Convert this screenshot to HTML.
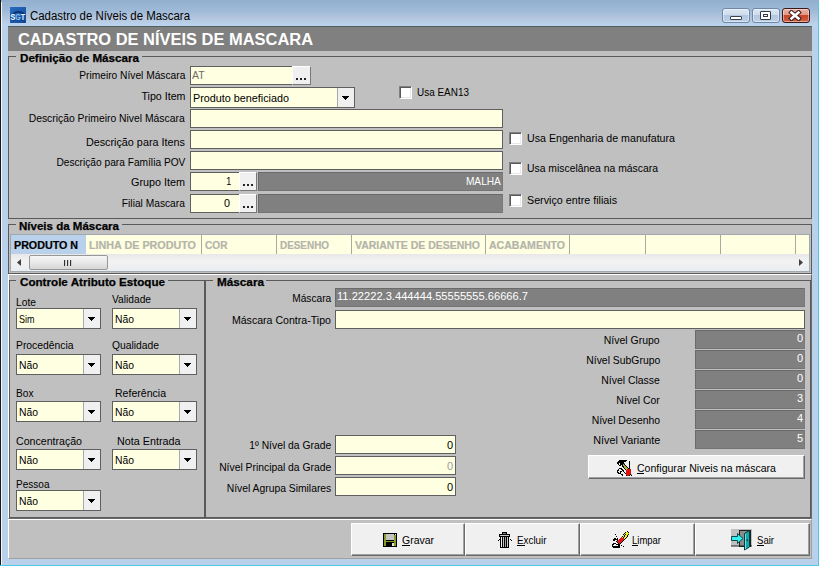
<!DOCTYPE html>
<html><head><meta charset="utf-8"><style>
html,body{margin:0;padding:0;width:819px;height:566px;overflow:hidden;background:#b9d1ea;}
body>div{position:absolute;box-sizing:border-box;}
.t{white-space:pre;}
</style></head><body>
<div style="left:0px;top:0px;width:819px;height:26px;background:linear-gradient(#92afcf 0px,#9fbad8 11px,#b4c6dd 18px,#bbd3ec 25px);"></div>
<div style="left:0px;top:0px;width:1px;height:566px;background:#1a1a1a;"></div>
<div style="left:1px;top:2px;width:1px;height:564px;background:#f4f8fc;"></div>
<div style="left:818px;top:2px;width:1px;height:564px;background:#50c8e8;"></div>
<div style="left:0px;top:565px;width:819px;height:1px;background:#50c8e8;"></div>
<svg style="position:absolute;left:10px;top:7px" width="16" height="16"><defs><linearGradient id="ig" x1="0" y1="0" x2="1" y2="1"><stop offset="0" stop-color="#2a6cc0"/><stop offset="1" stop-color="#114a98"/></linearGradient></defs><rect width="16" height="16" fill="url(#ig)"/><path d="M3 7Q8 2.5 14 7" stroke="#0a2f66" stroke-width="1.6" fill="none"/><path d="M2 14Q8 11 15 14" stroke="#0e3c7c" stroke-width="1.2" fill="none"/><text x="0.6" y="12.6" font-family="Liberation Sans" font-weight="bold" font-size="8.2" fill="#fff" textLength="14.6" lengthAdjust="spacingAndGlyphs">S<tspan fill="#8cc4f4">G</tspan><tspan fill="#e4f2ff">T</tspan></text></svg>
<div class="t" style="left:30px;top:9px;font:12px/14px 'Liberation Sans', sans-serif;color:#000;transform:scaleX(0.9519);transform-origin:left top;">Cadastro de Níveis de Mascara</div>
<div style="left:722px;top:8px;width:28px;height:15px;background:linear-gradient(#dbe6f3 0%,#cfdcec 45%,#b3c8e0 50%,#bccfe4 100%);border:1px solid #6f87a8;border-radius:3px;box-shadow:inset 0 0 0 1px rgba(255,255,255,0.45);"></div>
<div style="left:752px;top:8px;width:28px;height:15px;background:linear-gradient(#dbe6f3 0%,#cfdcec 45%,#b3c8e0 50%,#bccfe4 100%);border:1px solid #6f87a8;border-radius:3px;box-shadow:inset 0 0 0 1px rgba(255,255,255,0.45);"></div>
<div style="left:782px;top:8px;width:28px;height:15px;background:linear-gradient(#eab0a4 0%,#e29a8a 45%,#c6462c 50%,#d06040 100%);border:1px solid #3d1616;border-radius:3px;box-shadow:inset 0 0 0 1px rgba(255,255,255,0.45);"></div>
<div style="left:730px;top:16px;width:12px;height:4px;background:#fff;border:1px solid #3a4250;border-radius:1px;"></div>
<div style="left:760px;top:11px;width:11px;height:9px;background:#fff;border:1px solid #333a45;border-radius:1px;box-shadow:inset 0 0 0 2px #fff;"></div>
<div style="left:763px;top:14px;width:5px;height:3px;border:1px solid #333a45;"></div>
<svg style="position:absolute;left:788px;top:10px" width="14" height="11"><path d="M3.5 2.5L10.5 8.5M10.5 2.5L3.5 8.5" stroke="#3d1a1a" stroke-width="4.6" stroke-linecap="square"/><path d="M3.5 2.5L10.5 8.5M10.5 2.5L3.5 8.5" stroke="#fff" stroke-width="2.6" stroke-linecap="square"/></svg>
<div style="left:8px;top:26px;width:804px;height:532px;background:#c0c0c0;"></div>
<div style="left:8px;top:26px;width:804px;height:25px;background:#808080;border-top:1px solid #535e60;"></div>
<div class="t" style="left:18px;top:30px;font:bold 16px/20px 'Liberation Sans', sans-serif;color:#fff;transform:scaleX(1.0274);transform-origin:left top;">CADASTRO DE NÍVEIS DE MASCARA</div>
<div style="left:8px;top:56px;width:804px;height:163px;border:1px solid #5a5a5a;"></div>
<div style="left:16px;top:56px;width:126px;height:1px;background:#c0c0c0;"></div>
<div class="t" style="left:20px;top:52px;font:bold 11px/13px 'Liberation Sans', sans-serif;color:#000;transform:scaleX(1.0578);transform-origin:left top;-webkit-text-stroke:0.25px #000;">Definição de Máscara</div>
<div class="t" style="left:70.69px;top:69px;font:11px/13px 'Liberation Sans', sans-serif;color:#000;transform:scaleX(0.9273);transform-origin:right top;">Primeiro Nível Máscara</div>
<div style="left:190px;top:66px;width:103px;height:19px;background:#ffffe1;border:1px solid #5f5f5f;"></div>
<div style="left:292px;top:66px;width:19px;height:19px;background:#f0f0f0;border-top:1px solid #fff;border-left:1px solid #fff;border-right:1px solid #777;border-bottom:1px solid #777;"></div>
<div style="left:296px;top:78px;width:2px;height:2px;background:#222;"></div>
<div style="left:300px;top:78px;width:2px;height:2px;background:#222;"></div>
<div style="left:304px;top:78px;width:2px;height:2px;background:#222;"></div>
<div class="t" style="left:192px;top:69px;font:11px/13px 'Liberation Sans', sans-serif;color:#6d6d6d;transform:scaleX(0.9500);transform-origin:left top;">AT</div>
<div class="t" style="left:139.55px;top:90px;font:11px/13px 'Liberation Sans', sans-serif;color:#000;transform:scaleX(0.9680);transform-origin:right top;">Tipo Item</div>
<div style="left:190px;top:87px;width:165px;height:21px;background:#ffffe1;border:1px solid #5f5f5f;"></div>
<div style="left:337px;top:88px;width:17px;height:19px;background:#f0f0f0;border-left:1px solid #a8a8a8;"></div>
<svg style="position:absolute;left:342px;top:96px" width="7" height="4"><path d="M0 0H7L3.5 4Z" fill="#000" shape-rendering="crispEdges"/></svg>
<div class="t" style="left:193px;top:92px;font:11px/13px 'Liberation Sans', sans-serif;color:#000;transform:scaleX(0.9810);transform-origin:left top;">Produto beneficiado</div>
<div style="left:399px;top:86px;width:13px;height:13px;background:#fff;border-top:1px solid #808080;border-left:1px solid #808080;border-right:1px solid #fff;border-bottom:1px solid #fff;box-shadow:inset 1px 1px 0 #5a5a5a, inset -1px -1px 0 #e8e8e8;"></div>
<div class="t" style="left:417px;top:86px;font:11px/13px 'Liberation Sans', sans-serif;color:#000;transform:scaleX(0.9046);transform-origin:left top;">Usa EAN13</div>
<div class="t" style="left:19.34px;top:112px;font:11px/13px 'Liberation Sans', sans-serif;color:#000;transform:scaleX(0.9417);transform-origin:right top;">Descrição Primeiro Nivel Máscara</div>
<div style="left:190px;top:109px;width:313px;height:19px;background:#ffffe1;border:1px solid #5f5f5f;"></div>
<div class="t" style="left:84.11px;top:136px;font:11px/13px 'Liberation Sans', sans-serif;color:#000;transform:scaleX(0.9813);transform-origin:right top;">Descrição para Itens</div>
<div style="left:190px;top:130px;width:313px;height:19px;background:#ffffe1;border:1px solid #5f5f5f;"></div>
<div class="t" style="left:45.61px;top:156px;font:11px/13px 'Liberation Sans', sans-serif;color:#000;transform:scaleX(0.9255);transform-origin:right top;">Descrição para Família POV</div>
<div style="left:190px;top:151px;width:313px;height:19px;background:#ffffe1;border:1px solid #5f5f5f;"></div>
<div class="t" style="left:129.97px;top:176px;font:11px/13px 'Liberation Sans', sans-serif;color:#000;transform:scaleX(0.9813);transform-origin:right top;">Grupo Item</div>
<div style="left:190px;top:172px;width:50px;height:19px;background:#ffffe1;border:1px solid #5f5f5f;"></div>
<div style="left:239px;top:172px;width:18px;height:19px;background:#f0f0f0;border-top:1px solid #fff;border-left:1px solid #fff;border-right:1px solid #777;border-bottom:1px solid #777;"></div>
<div style="left:243px;top:184px;width:2px;height:2px;background:#222;"></div>
<div style="left:247px;top:184px;width:2px;height:2px;background:#222;"></div>
<div style="left:251px;top:184px;width:2px;height:2px;background:#222;"></div>
<div class="t" style="left:224.88px;top:175px;font:11px/13px 'Liberation Sans', sans-serif;color:#000;transform:scaleX(0.8163);transform-origin:right top;">1</div>
<div style="left:258px;top:172px;width:245px;height:19px;background:#808080;border:1px solid #6a6a6a;border-right-color:#7a7a7a;border-bottom-color:#747474;"></div>
<div class="t" style="left:463.09px;top:175px;font:11px/13px 'Liberation Sans', sans-serif;color:#fff;transform:scaleX(0.9233);transform-origin:right top;">MALHA</div>
<div class="t" style="left:117.14px;top:197px;font:11px/13px 'Liberation Sans', sans-serif;color:#000;transform:scaleX(0.9284);transform-origin:right top;">Filial Mascara</div>
<div style="left:190px;top:194px;width:50px;height:19px;background:#ffffe1;border:1px solid #5f5f5f;"></div>
<div style="left:239px;top:194px;width:18px;height:19px;background:#f0f0f0;border-top:1px solid #fff;border-left:1px solid #fff;border-right:1px solid #777;border-bottom:1px solid #777;"></div>
<div style="left:243px;top:206px;width:2px;height:2px;background:#222;"></div>
<div style="left:247px;top:206px;width:2px;height:2px;background:#222;"></div>
<div style="left:251px;top:206px;width:2px;height:2px;background:#222;"></div>
<div class="t" style="left:223.88px;top:197px;font:11px/13px 'Liberation Sans', sans-serif;color:#000;transform:scaleX(0.9796);transform-origin:right top;">0</div>
<div style="left:258px;top:194px;width:245px;height:19px;background:#808080;border:1px solid #6a6a6a;border-right-color:#7a7a7a;border-bottom-color:#747474;"></div>
<div style="left:509px;top:132px;width:13px;height:13px;background:#fff;border-top:1px solid #808080;border-left:1px solid #808080;border-right:1px solid #fff;border-bottom:1px solid #fff;box-shadow:inset 1px 1px 0 #5a5a5a, inset -1px -1px 0 #e8e8e8;"></div>
<div class="t" style="left:527px;top:132px;font:11px/13px 'Liberation Sans', sans-serif;color:#000;transform:scaleX(0.9680);transform-origin:left top;">Usa Engenharia de manufatura</div>
<div style="left:509px;top:162px;width:13px;height:13px;background:#fff;border-top:1px solid #808080;border-left:1px solid #808080;border-right:1px solid #fff;border-bottom:1px solid #fff;box-shadow:inset 1px 1px 0 #5a5a5a, inset -1px -1px 0 #e8e8e8;"></div>
<div class="t" style="left:527px;top:162px;font:11px/13px 'Liberation Sans', sans-serif;color:#000;transform:scaleX(0.9438);transform-origin:left top;">Usa miscelânea na máscara</div>
<div style="left:509px;top:194px;width:13px;height:13px;background:#fff;border-top:1px solid #808080;border-left:1px solid #808080;border-right:1px solid #fff;border-bottom:1px solid #fff;box-shadow:inset 1px 1px 0 #5a5a5a, inset -1px -1px 0 #e8e8e8;"></div>
<div class="t" style="left:527px;top:194px;font:11px/13px 'Liberation Sans', sans-serif;color:#000;transform:scaleX(0.9748);transform-origin:left top;">Serviço entre filiais</div>
<div style="left:8px;top:224px;width:804px;height:50px;border:1px solid #5a5a5a;"></div>
<div style="left:16px;top:224px;width:106px;height:1px;background:#c0c0c0;"></div>
<div class="t" style="left:19px;top:220px;font:bold 11px/13px 'Liberation Sans', sans-serif;color:#000;transform:scaleX(1.0483);transform-origin:left top;-webkit-text-stroke:0.25px #000;">Níveis da Máscara</div>
<div style="left:10px;top:234px;width:800px;height:38px;background:#f0f0f0;border:1px solid #a0a8b0;"></div>
<div style="left:11px;top:235px;width:798px;height:19px;background:#ffffe1;"></div>
<div style="left:11px;top:235px;width:75px;height:19px;background:#b9d1ea;"></div>
<div style="left:201px;top:235px;width:1px;height:19px;background:#a9a9a0;"></div>
<div style="left:276px;top:235px;width:1px;height:19px;background:#a9a9a0;"></div>
<div style="left:351px;top:235px;width:1px;height:19px;background:#a9a9a0;"></div>
<div style="left:485px;top:235px;width:1px;height:19px;background:#a9a9a0;"></div>
<div style="left:569px;top:235px;width:1px;height:19px;background:#a9a9a0;"></div>
<div style="left:645px;top:235px;width:1px;height:19px;background:#a9a9a0;"></div>
<div style="left:720px;top:235px;width:1px;height:19px;background:#a9a9a0;"></div>
<div style="left:795px;top:235px;width:1px;height:19px;background:#a9a9a0;"></div>
<div class="t" style="left:14px;top:239px;font:bold 11px/13px 'Liberation Sans', sans-serif;color:#000;transform:scaleX(0.9725);transform-origin:left top;-webkit-text-stroke:0.2px #000;">PRODUTO N</div>
<div class="t" style="left:89px;top:239px;font:bold 11px/13px 'Liberation Sans', sans-serif;color:#b4b4aa;transform:scaleX(0.9780);transform-origin:left top;-webkit-text-stroke:0.2px #b4b4aa;">LINHA DE PRODUTO</div>
<div class="t" style="left:205px;top:239px;font:bold 11px/13px 'Liberation Sans', sans-serif;color:#b4b4aa;transform:scaleX(0.9201);transform-origin:left top;-webkit-text-stroke:0.2px #b4b4aa;">COR</div>
<div class="t" style="left:280px;top:239px;font:bold 11px/13px 'Liberation Sans', sans-serif;color:#b4b4aa;transform:scaleX(0.9006);transform-origin:left top;-webkit-text-stroke:0.2px #b4b4aa;">DESENHO</div>
<div class="t" style="left:355px;top:239px;font:bold 11px/13px 'Liberation Sans', sans-serif;color:#b4b4aa;transform:scaleX(0.9527);transform-origin:left top;-webkit-text-stroke:0.2px #b4b4aa;">VARIANTE DE DESENHO</div>
<div class="t" style="left:489px;top:239px;font:bold 11px/13px 'Liberation Sans', sans-serif;color:#b4b4aa;transform:scaleX(0.9590);transform-origin:left top;-webkit-text-stroke:0.2px #b4b4aa;">ACABAMENTO</div>
<div style="left:11px;top:254px;width:798px;height:17px;background:linear-gradient(#e8e8e8,#f2f2f2 40%,#eaeef2);"></div>
<svg style="position:absolute;left:17px;top:259px" width="5" height="8"><path d="M4 0V7L0 3.5Z" fill="#404040"/></svg>
<svg style="position:absolute;left:799px;top:259px" width="5" height="8"><path d="M0 0V7L4 3.5Z" fill="#404040"/></svg>
<div style="left:29px;top:255px;width:79px;height:15px;background:linear-gradient(#f6f6f6,#e8e8e8 50%,#d6d6d6);border:1px solid #979797;border-radius:2px;"></div>
<div style="left:64px;top:260px;width:2px;height:6px;background:linear-gradient(90deg,#333 50%,#ccc 50%);"></div>
<div style="left:67px;top:260px;width:2px;height:6px;background:linear-gradient(90deg,#333 50%,#ccc 50%);"></div>
<div style="left:70px;top:260px;width:2px;height:6px;background:linear-gradient(90deg,#333 50%,#ccc 50%);"></div>
<div style="left:8px;top:274px;width:804px;height:245px;border-top:1px solid #fff;border-left:1px solid #fff;border-right:1px solid #6a6a6a;border-bottom:1px solid #6a6a6a;"></div>
<div style="left:9px;top:280px;width:196px;height:238px;border:1px solid #5a5a5a;"></div>
<div style="left:16px;top:280px;width:152px;height:1px;background:#c0c0c0;"></div>
<div class="t" style="left:20px;top:276px;font:bold 11px/13px 'Liberation Sans', sans-serif;color:#000;transform:scaleX(1.0577);transform-origin:left top;-webkit-text-stroke:0.25px #000;">Controle Atributo Estoque</div>
<div class="t" style="left:16px;top:296px;font:11px/13px 'Liberation Sans', sans-serif;color:#000;transform:scaleX(0.9336);transform-origin:left top;">Lote</div>
<div style="left:16px;top:308px;width:85px;height:21px;background:#ffffe1;border:1px solid #5f5f5f;"></div>
<div style="left:83px;top:309px;width:17px;height:19px;background:#f0f0f0;border-left:1px solid #a8a8a8;"></div>
<svg style="position:absolute;left:88px;top:317px" width="7" height="4"><path d="M0 0H7L3.5 4Z" fill="#000" shape-rendering="crispEdges"/></svg>
<div class="t" style="left:19px;top:313px;font:11px/13px 'Liberation Sans', sans-serif;color:#000;transform:scaleX(0.8178);transform-origin:left top;">Sim</div>
<div class="t" style="left:112px;top:293px;font:11px/13px 'Liberation Sans', sans-serif;color:#000;transform:scaleX(0.9286);transform-origin:left top;">Validade</div>
<div style="left:112px;top:308px;width:85px;height:21px;background:#ffffe1;border:1px solid #5f5f5f;"></div>
<div style="left:179px;top:309px;width:17px;height:19px;background:#f0f0f0;border-left:1px solid #a8a8a8;"></div>
<svg style="position:absolute;left:184px;top:317px" width="7" height="4"><path d="M0 0H7L3.5 4Z" fill="#000" shape-rendering="crispEdges"/></svg>
<div class="t" style="left:115px;top:313px;font:11px/13px 'Liberation Sans', sans-serif;color:#000;transform:scaleX(0.9412);transform-origin:left top;">Não</div>
<div class="t" style="left:16px;top:339px;font:11px/13px 'Liberation Sans', sans-serif;color:#000;transform:scaleX(0.9402);transform-origin:left top;">Procedência</div>
<div style="left:16px;top:354px;width:85px;height:21px;background:#ffffe1;border:1px solid #5f5f5f;"></div>
<div style="left:83px;top:355px;width:17px;height:19px;background:#f0f0f0;border-left:1px solid #a8a8a8;"></div>
<svg style="position:absolute;left:88px;top:363px" width="7" height="4"><path d="M0 0H7L3.5 4Z" fill="#000" shape-rendering="crispEdges"/></svg>
<div class="t" style="left:19px;top:359px;font:11px/13px 'Liberation Sans', sans-serif;color:#000;transform:scaleX(0.9412);transform-origin:left top;">Não</div>
<div class="t" style="left:112px;top:339px;font:11px/13px 'Liberation Sans', sans-serif;color:#000;transform:scaleX(0.9371);transform-origin:left top;">Qualidade</div>
<div style="left:112px;top:354px;width:85px;height:21px;background:#ffffe1;border:1px solid #5f5f5f;"></div>
<div style="left:179px;top:355px;width:17px;height:19px;background:#f0f0f0;border-left:1px solid #a8a8a8;"></div>
<svg style="position:absolute;left:184px;top:363px" width="7" height="4"><path d="M0 0H7L3.5 4Z" fill="#000" shape-rendering="crispEdges"/></svg>
<div class="t" style="left:115px;top:359px;font:11px/13px 'Liberation Sans', sans-serif;color:#000;transform:scaleX(0.9412);transform-origin:left top;">Não</div>
<div class="t" style="left:16px;top:387px;font:11px/13px 'Liberation Sans', sans-serif;color:#000;transform:scaleX(0.9226);transform-origin:left top;">Box</div>
<div style="left:16px;top:401px;width:85px;height:21px;background:#ffffe1;border:1px solid #5f5f5f;"></div>
<div style="left:83px;top:402px;width:17px;height:19px;background:#f0f0f0;border-left:1px solid #a8a8a8;"></div>
<svg style="position:absolute;left:88px;top:410px" width="7" height="4"><path d="M0 0H7L3.5 4Z" fill="#000" shape-rendering="crispEdges"/></svg>
<div class="t" style="left:19px;top:406px;font:11px/13px 'Liberation Sans', sans-serif;color:#000;transform:scaleX(0.9412);transform-origin:left top;">Não</div>
<div class="t" style="left:115px;top:387px;font:11px/13px 'Liberation Sans', sans-serif;color:#000;transform:scaleX(0.9586);transform-origin:left top;">Referência</div>
<div style="left:112px;top:401px;width:85px;height:21px;background:#ffffe1;border:1px solid #5f5f5f;"></div>
<div style="left:179px;top:402px;width:17px;height:19px;background:#f0f0f0;border-left:1px solid #a8a8a8;"></div>
<svg style="position:absolute;left:184px;top:410px" width="7" height="4"><path d="M0 0H7L3.5 4Z" fill="#000" shape-rendering="crispEdges"/></svg>
<div class="t" style="left:115px;top:406px;font:11px/13px 'Liberation Sans', sans-serif;color:#000;transform:scaleX(0.9412);transform-origin:left top;">Não</div>
<div class="t" style="left:16px;top:435px;font:11px/13px 'Liberation Sans', sans-serif;color:#000;transform:scaleX(0.9635);transform-origin:left top;">Concentração</div>
<div style="left:16px;top:449px;width:85px;height:21px;background:#ffffe1;border:1px solid #5f5f5f;"></div>
<div style="left:83px;top:450px;width:17px;height:19px;background:#f0f0f0;border-left:1px solid #a8a8a8;"></div>
<svg style="position:absolute;left:88px;top:458px" width="7" height="4"><path d="M0 0H7L3.5 4Z" fill="#000" shape-rendering="crispEdges"/></svg>
<div class="t" style="left:19px;top:454px;font:11px/13px 'Liberation Sans', sans-serif;color:#000;transform:scaleX(0.9412);transform-origin:left top;">Não</div>
<div class="t" style="left:117px;top:435px;font:11px/13px 'Liberation Sans', sans-serif;color:#000;transform:scaleX(0.9795);transform-origin:left top;">Nota Entrada</div>
<div style="left:112px;top:449px;width:85px;height:21px;background:#ffffe1;border:1px solid #5f5f5f;"></div>
<div style="left:179px;top:450px;width:17px;height:19px;background:#f0f0f0;border-left:1px solid #a8a8a8;"></div>
<svg style="position:absolute;left:184px;top:458px" width="7" height="4"><path d="M0 0H7L3.5 4Z" fill="#000" shape-rendering="crispEdges"/></svg>
<div class="t" style="left:115px;top:454px;font:11px/13px 'Liberation Sans', sans-serif;color:#000;transform:scaleX(0.9412);transform-origin:left top;">Não</div>
<div class="t" style="left:16px;top:478px;font:11px/13px 'Liberation Sans', sans-serif;color:#000;transform:scaleX(0.9127);transform-origin:left top;">Pessoa</div>
<div style="left:16px;top:490px;width:85px;height:21px;background:#ffffe1;border:1px solid #5f5f5f;"></div>
<div style="left:83px;top:491px;width:17px;height:19px;background:#f0f0f0;border-left:1px solid #a8a8a8;"></div>
<svg style="position:absolute;left:88px;top:499px" width="7" height="4"><path d="M0 0H7L3.5 4Z" fill="#000" shape-rendering="crispEdges"/></svg>
<div class="t" style="left:19px;top:495px;font:11px/13px 'Liberation Sans', sans-serif;color:#000;transform:scaleX(0.9412);transform-origin:left top;">Não</div>
<div style="left:205px;top:280px;width:606px;height:238px;border:1px solid #5a5a5a;"></div>
<div style="left:213px;top:280px;width:53px;height:1px;background:#c0c0c0;"></div>
<div class="t" style="left:217px;top:276px;font:bold 11px/13px 'Liberation Sans', sans-serif;color:#000;transform:scaleX(1.0670);transform-origin:left top;-webkit-text-stroke:0.25px #000;">Máscara</div>
<div class="t" style="left:288.81px;top:292px;font:11px/13px 'Liberation Sans', sans-serif;color:#000;transform:scaleX(0.9244);transform-origin:right top;">Máscara</div>
<div style="left:335px;top:288px;width:470px;height:19px;background:#808080;border:1px solid #6a6a6a;border-right-color:#7a7a7a;border-bottom-color:#747474;"></div>
<div class="t" style="left:337px;top:290px;font:11px/13px 'Liberation Sans', sans-serif;color:#fff;transform:scaleX(1.0115);transform-origin:left top;">11.22222.3.444444.55555555.66666.7</div>
<div class="t" style="left:228.09px;top:314px;font:11px/13px 'Liberation Sans', sans-serif;color:#000;transform:scaleX(0.9620);transform-origin:right top;">Máscara Contra-Tipo</div>
<div style="left:335px;top:310px;width:470px;height:19px;background:#ffffe1;border:1px solid #5f5f5f;"></div>
<div class="t" style="left:601.30px;top:334px;font:11px/13px 'Liberation Sans', sans-serif;color:#000;transform:scaleX(0.9540);transform-origin:right top;">Nível Grupo</div>
<div style="left:695px;top:330px;width:110px;height:19px;background:#808080;border:1px solid #6a6a6a;border-right-color:#7a7a7a;border-bottom-color:#747474;"></div>
<div class="t" style="left:796.88px;top:332px;font:11px/13px 'Liberation Sans', sans-serif;color:#fff;">0</div>
<div class="t" style="left:581.73px;top:354px;font:11px/13px 'Liberation Sans', sans-serif;color:#000;transform:scaleX(0.9455);transform-origin:right top;">Nível SubGrupo</div>
<div style="left:695px;top:350px;width:110px;height:19px;background:#808080;border:1px solid #6a6a6a;border-right-color:#7a7a7a;border-bottom-color:#747474;"></div>
<div class="t" style="left:796.88px;top:352px;font:11px/13px 'Liberation Sans', sans-serif;color:#fff;">0</div>
<div class="t" style="left:598.25px;top:374px;font:11px/13px 'Liberation Sans', sans-serif;color:#000;transform:scaleX(0.9474);transform-origin:right top;">Nível Classe</div>
<div style="left:695px;top:370px;width:110px;height:19px;background:#808080;border:1px solid #6a6a6a;border-right-color:#7a7a7a;border-bottom-color:#747474;"></div>
<div class="t" style="left:796.88px;top:372px;font:11px/13px 'Liberation Sans', sans-serif;color:#fff;">0</div>
<div class="t" style="left:614.16px;top:394px;font:11px/13px 'Liberation Sans', sans-serif;color:#000;transform:scaleX(0.9489);transform-origin:right top;">Nível Cor</div>
<div style="left:695px;top:390px;width:110px;height:19px;background:#808080;border:1px solid #6a6a6a;border-right-color:#7a7a7a;border-bottom-color:#747474;"></div>
<div class="t" style="left:796.88px;top:392px;font:11px/13px 'Liberation Sans', sans-serif;color:#fff;">3</div>
<div class="t" style="left:587.84px;top:414px;font:11px/13px 'Liberation Sans', sans-serif;color:#000;transform:scaleX(0.9493);transform-origin:right top;">Nível Desenho</div>
<div style="left:695px;top:410px;width:110px;height:19px;background:#808080;border:1px solid #6a6a6a;border-right-color:#7a7a7a;border-bottom-color:#747474;"></div>
<div class="t" style="left:796.88px;top:412px;font:11px/13px 'Liberation Sans', sans-serif;color:#fff;">4</div>
<div class="t" style="left:591.72px;top:434px;font:11px/13px 'Liberation Sans', sans-serif;color:#000;transform:scaleX(0.9812);transform-origin:right top;">Nível Variante</div>
<div style="left:695px;top:430px;width:110px;height:19px;background:#808080;border:1px solid #6a6a6a;border-right-color:#7a7a7a;border-bottom-color:#747474;"></div>
<div class="t" style="left:796.88px;top:432px;font:11px/13px 'Liberation Sans', sans-serif;color:#fff;">5</div>
<div class="t" style="left:243.81px;top:439px;font:11px/13px 'Liberation Sans', sans-serif;color:#000;transform:scaleX(0.9400);transform-origin:right top;">1º Nível da Grade</div>
<div style="left:335px;top:435px;width:121px;height:19px;background:#ffffe1;border:1px solid #5f5f5f;"></div>
<div class="t" style="left:446.88px;top:439px;font:11px/13px 'Liberation Sans', sans-serif;color:#000;">0</div>
<div class="t" style="left:211.77px;top:461px;font:11px/13px 'Liberation Sans', sans-serif;color:#000;transform:scaleX(0.9400);transform-origin:right top;">Nível Principal da Grade</div>
<div style="left:335px;top:456px;width:121px;height:19px;background:#ffffe1;border:1px solid #5f5f5f;"></div>
<div class="t" style="left:446.88px;top:460px;font:11px/13px 'Liberation Sans', sans-serif;color:#9a9a9a;">0</div>
<div class="t" style="left:219.72px;top:482px;font:11px/13px 'Liberation Sans', sans-serif;color:#000;transform:scaleX(0.9400);transform-origin:right top;">Nível Agrupa Similares</div>
<div style="left:335px;top:477px;width:121px;height:19px;background:#ffffe1;border:1px solid #5f5f5f;"></div>
<div class="t" style="left:446.88px;top:481px;font:11px/13px 'Liberation Sans', sans-serif;color:#000;">0</div>
<div style="left:588px;top:455px;width:217px;height:24px;background:#f0f0f0;border-top:1px solid #fff;border-left:1px solid #fff;border-right:1px solid #696969;border-bottom:1px solid #696969;box-shadow:inset -1px -1px 0 #a0a0a0;"></div>
<div class="t" style="left:637px;top:462px;font:11px/13px 'Liberation Sans', sans-serif;color:#000;transform:scaleX(0.9593);transform-origin:left top;">Configurar Niveis na máscara</div>
<div style="left:637px;top:473px;width:7px;height:1px;background:#000;"></div>
<div style="left:8px;top:519px;width:804px;height:40px;border-top:1px solid #fff;border-left:1px solid #fff;border-right:1px solid #a0a0a0;border-bottom:1px solid #a0a0a0;"></div>
<div style="left:351px;top:523px;width:114px;height:33px;background:#f0f0f0;border-top:1px solid #fff;border-left:1px solid #fff;border-right:1px solid #696969;border-bottom:1px solid #696969;box-shadow:inset -1px -1px 0 #a0a0a0;"></div>
<div class="t" style="left:402px;top:534px;font:11px/13px 'Liberation Sans', sans-serif;color:#000;transform:scaleX(0.9517);transform-origin:left top;">Gravar</div>
<div style="left:402px;top:545px;width:8px;height:1px;background:#000;"></div>
<div style="left:465px;top:523px;width:115px;height:33px;background:#f0f0f0;border-top:1px solid #fff;border-left:1px solid #fff;border-right:1px solid #696969;border-bottom:1px solid #696969;box-shadow:inset -1px -1px 0 #a0a0a0;"></div>
<div class="t" style="left:517px;top:534px;font:11px/13px 'Liberation Sans', sans-serif;color:#000;transform:scaleX(0.8935);transform-origin:left top;">Excluir</div>
<div style="left:517px;top:545px;width:8px;height:1px;background:#000;"></div>
<div style="left:580px;top:523px;width:115px;height:33px;background:#f0f0f0;border-top:1px solid #fff;border-left:1px solid #fff;border-right:1px solid #696969;border-bottom:1px solid #696969;box-shadow:inset -1px -1px 0 #a0a0a0;"></div>
<div class="t" style="left:632px;top:534px;font:11px/13px 'Liberation Sans', sans-serif;color:#000;transform:scaleX(0.8625);transform-origin:left top;">Limpar</div>
<div style="left:632px;top:545px;width:6px;height:1px;background:#000;"></div>
<div style="left:695px;top:523px;width:115px;height:33px;background:#f0f0f0;border-top:1px solid #fff;border-left:1px solid #fff;border-right:1px solid #696969;border-bottom:1px solid #696969;box-shadow:inset -1px -1px 0 #a0a0a0;"></div>
<div class="t" style="left:757px;top:534px;font:11px/13px 'Liberation Sans', sans-serif;color:#000;transform:scaleX(0.8690);transform-origin:left top;">Sair</div>
<div style="left:757px;top:545px;width:7px;height:1px;background:#000;"></div>
<svg style="position:absolute;left:383px;top:533px" width="14" height="14" shape-rendering="crispEdges"><rect width="14" height="14" fill="#000"/><rect x="1" y="1" width="2" height="12" fill="#8a9a28"/><rect x="11" y="2" width="2" height="11" fill="#8a9a28"/><rect x="12" y="1" width="1" height="1" fill="#e8e8e8"/><rect x="3" y="1" width="8" height="6" fill="#c4c4c4"/><rect x="1" y="8" width="12" height="1" fill="#8a9a28"/><rect x="9" y="10" width="2" height="3" fill="#e4e4d0"/></svg>
<svg style="position:absolute;left:497px;top:531px" width="16" height="18" shape-rendering="crispEdges"><rect x="5" y="1" width="5" height="2" fill="#000"/><rect x="6" y="2" width="3" height="1" fill="#808080"/><rect x="2" y="3" width="11" height="3" fill="#000"/><rect x="3" y="4" width="9" height="1" fill="#c8c8c8"/><rect x="3" y="6" width="9" height="11" fill="#000"/><rect x="4" y="6" width="1" height="10" fill="#f0f0f0"/><rect x="6" y="6" width="1" height="10" fill="#c8c8c8"/><rect x="8" y="6" width="1" height="10" fill="#a0a0a0"/><rect x="10" y="6" width="1" height="10" fill="#c8c8c8"/><rect x="1" y="9" width="1" height="1" fill="#000"/><rect x="2" y="8" width="1" height="1" fill="#000"/><rect x="13" y="8" width="1" height="1" fill="#000"/><rect x="14" y="9" width="1" height="1" fill="#000"/></svg>
<svg style="position:absolute;left:731px;top:529px" width="22" height="22"><rect x="0" y="0" width="21" height="17" fill="#c0c0c0"/><rect x="8.5" y="1.5" width="11" height="16" fill="#8c8c8c" stroke="#202020" stroke-width="1"/><rect x="0" y="16.5" width="21" height="1" fill="#202020"/><path d="M13.5 4.5L18.5 1.5V18L13.5 21Z" fill="#10a8a8" stroke="#0a3a3a" stroke-width="1"/><path d="M14 5L15 4.5V20L14 20.5Z" fill="#60e8e8"/><rect x="15.6" y="10.5" width="1.2" height="1.5" fill="#0a2a2a"/><path d="M0.5 7.5H6.5V4.5L12 9.5L6.5 14.5V11.5H0.5Z" fill="#30f0f0" stroke="#0a4a4a" stroke-width="1"/></svg>
<svg style="position:absolute;left:614px;top:457px" width="22" height="19" shape-rendering="crispEdges"><rect x="5" y="3" width="8" height="1" fill="#000"/><rect x="4" y="4" width="8" height="1" fill="#000"/><rect x="15" y="4" width="1" height="1" fill="#000"/><rect x="3" y="5" width="7" height="1" fill="#000"/><rect x="15" y="5" width="1" height="1" fill="#000"/><rect x="3" y="6" width="2" height="1" fill="#000"/><rect x="6" y="6" width="4" height="1" fill="#000"/><rect x="10" y="6" width="1" height="1" fill="#808080"/><rect x="15" y="6" width="1" height="1" fill="#000"/><rect x="4" y="7" width="1" height="1" fill="#000"/><rect x="6" y="7" width="3" height="1" fill="#000"/><rect x="9" y="7" width="1" height="1" fill="#b0b040"/><rect x="10" y="7" width="1" height="1" fill="#000"/><rect x="15" y="7" width="1" height="1" fill="#000"/><rect x="5" y="8" width="2" height="1" fill="#000"/><rect x="8" y="8" width="1" height="1" fill="#000"/><rect x="9" y="8" width="2" height="1" fill="#b0b040"/><rect x="11" y="8" width="1" height="1" fill="#000"/><rect x="15" y="8" width="1" height="1" fill="#000"/><rect x="8" y="9" width="2" height="1" fill="#000"/><rect x="10" y="9" width="2" height="1" fill="#b0b040"/><rect x="12" y="9" width="1" height="1" fill="#000"/><rect x="15" y="9" width="1" height="1" fill="#000"/><rect x="9" y="10" width="1" height="1" fill="#000"/><rect x="10" y="10" width="3" height="1" fill="#b0b040"/><rect x="13" y="10" width="1" height="1" fill="#000"/><rect x="15" y="10" width="1" height="1" fill="#000"/><rect x="5" y="11" width="3" height="1" fill="#000"/><rect x="10" y="11" width="1" height="1" fill="#000"/><rect x="11" y="11" width="3" height="1" fill="#b0b040"/><rect x="14" y="11" width="2" height="1" fill="#000"/><rect x="4" y="12" width="1" height="1" fill="#000"/><rect x="7" y="12" width="2" height="1" fill="#000"/><rect x="11" y="12" width="1" height="1" fill="#000"/><rect x="12" y="12" width="1" height="1" fill="#b0b040"/><rect x="13" y="12" width="4" height="1" fill="#e01010"/><rect x="3" y="13" width="2" height="1" fill="#000"/><rect x="8" y="13" width="2" height="1" fill="#000"/><rect x="12" y="13" width="5" height="1" fill="#e01010"/><rect x="3" y="14" width="1" height="1" fill="#000"/><rect x="6" y="14" width="2" height="1" fill="#000"/><rect x="9" y="14" width="1" height="1" fill="#000"/><rect x="12" y="14" width="5" height="1" fill="#e01010"/><rect x="3" y="15" width="2" height="1" fill="#000"/><rect x="6" y="15" width="1" height="1" fill="#000"/><rect x="10" y="15" width="1" height="1" fill="#000"/><rect x="12" y="15" width="5" height="1" fill="#e01010"/><rect x="4" y="16" width="3" height="1" fill="#000"/><rect x="11" y="16" width="1" height="1" fill="#000"/><rect x="12" y="16" width="5" height="1" fill="#e01010"/><rect x="7" y="17" width="2" height="1" fill="#000"/><rect x="12" y="17" width="4" height="1" fill="#e01010"/><rect x="16" y="17" width="1" height="1" fill="#000"/><rect x="17" y="17" width="1" height="1" fill="#b0b040"/><rect x="8" y="18" width="1" height="1" fill="#000"/><rect x="12" y="18" width="1" height="1" fill="#000"/><rect x="13" y="18" width="2" height="1" fill="#e01010"/><rect x="15" y="18" width="1" height="1" fill="#000"/><rect x="17" y="18" width="1" height="1" fill="#000"/></svg>
<svg style="position:absolute;left:610px;top:530px" width="20" height="18" shape-rendering="crispEdges"><rect x="17" y="1" width="1" height="1" fill="#000"/><rect x="15" y="2" width="1" height="1" fill="#000"/><rect x="16" y="2" width="2" height="1" fill="#f0f020"/><rect x="18" y="2" width="1" height="1" fill="#000"/><rect x="14" y="3" width="1" height="1" fill="#000"/><rect x="15" y="3" width="4" height="1" fill="#f0f020"/><rect x="5" y="4" width="1" height="1" fill="#000"/><rect x="13" y="4" width="1" height="1" fill="#000"/><rect x="14" y="4" width="1" height="1" fill="#f0f020"/><rect x="15" y="4" width="1" height="1" fill="#000"/><rect x="16" y="4" width="2" height="1" fill="#f0f020"/><rect x="18" y="4" width="1" height="1" fill="#000"/><rect x="13" y="5" width="1" height="1" fill="#f0f020"/><rect x="14" y="5" width="1" height="1" fill="#000"/><rect x="15" y="5" width="2" height="1" fill="#f0f020"/><rect x="17" y="5" width="1" height="1" fill="#000"/><rect x="6" y="6" width="1" height="1" fill="#000"/><rect x="12" y="6" width="1" height="1" fill="#000"/><rect x="13" y="6" width="1" height="1" fill="#f0f020"/><rect x="14" y="6" width="1" height="1" fill="#000"/><rect x="15" y="6" width="2" height="1" fill="#f0f020"/><rect x="17" y="6" width="1" height="1" fill="#000"/><rect x="11" y="7" width="1" height="1" fill="#e01818"/><rect x="12" y="7" width="1" height="1" fill="#f0f020"/><rect x="13" y="7" width="1" height="1" fill="#000"/><rect x="14" y="7" width="2" height="1" fill="#f0f020"/><rect x="16" y="7" width="1" height="1" fill="#000"/><rect x="4" y="8" width="2" height="1" fill="#000"/><rect x="7" y="8" width="1" height="1" fill="#000"/><rect x="10" y="8" width="4" height="1" fill="#e01818"/><rect x="14" y="8" width="1" height="1" fill="#f0f020"/><rect x="15" y="8" width="1" height="1" fill="#000"/><rect x="3" y="9" width="5" height="1" fill="#000"/><rect x="9" y="9" width="5" height="1" fill="#e01818"/><rect x="14" y="9" width="1" height="1" fill="#000"/><rect x="3" y="10" width="2" height="1" fill="#000"/><rect x="7" y="10" width="1" height="1" fill="#000"/><rect x="8" y="10" width="5" height="1" fill="#e01818"/><rect x="13" y="10" width="1" height="1" fill="#000"/><rect x="6" y="11" width="1" height="1" fill="#000"/><rect x="7" y="11" width="5" height="1" fill="#e01818"/><rect x="12" y="11" width="1" height="1" fill="#000"/><rect x="7" y="12" width="1" height="1" fill="#000"/><rect x="8" y="12" width="3" height="1" fill="#e01818"/><rect x="11" y="12" width="1" height="1" fill="#000"/><rect x="3" y="13" width="3" height="1" fill="#000"/><rect x="8" y="13" width="1" height="1" fill="#000"/><rect x="9" y="13" width="1" height="1" fill="#e01818"/><rect x="10" y="13" width="1" height="1" fill="#000"/><rect x="2" y="14" width="2" height="1" fill="#000"/><rect x="6" y="14" width="4" height="1" fill="#000"/><rect x="2" y="15" width="1" height="1" fill="#000"/><rect x="8" y="15" width="2" height="1" fill="#000"/><rect x="11" y="15" width="1" height="1" fill="#000"/><rect x="2" y="16" width="8" height="1" fill="#000"/><rect x="13" y="16" width="1" height="1" fill="#000"/><rect x="3" y="17" width="7" height="1" fill="#000"/></svg>
</body></html>
